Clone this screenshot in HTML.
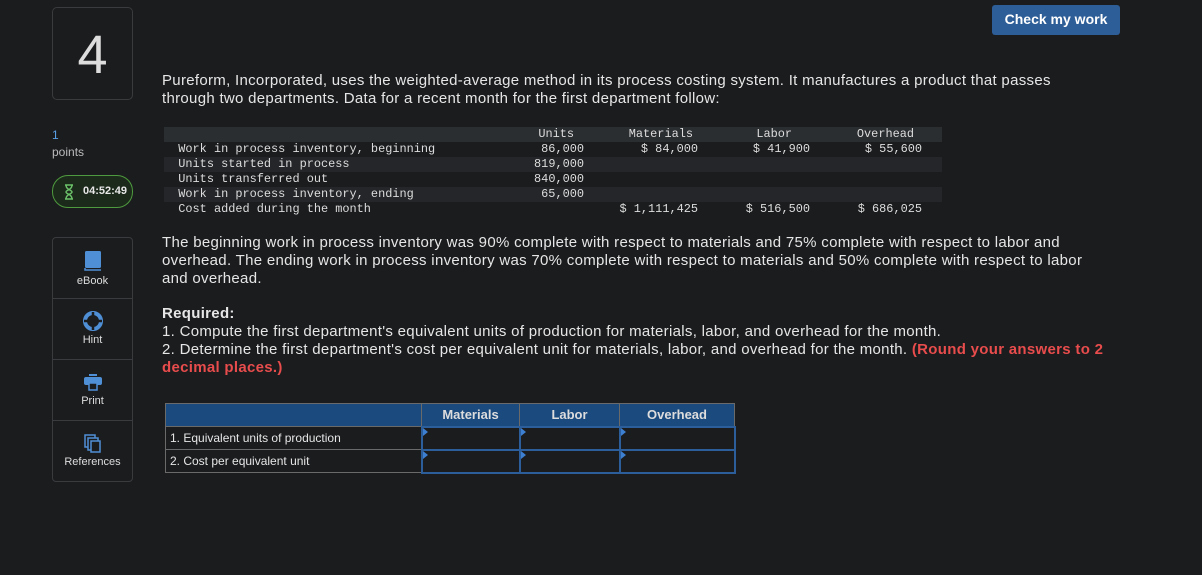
<!DOCTYPE html>
<html><head><style>
body{margin:0;width:1202px;height:575px;background:#1b1c1e;font-family:"Liberation Sans",sans-serif;color:#e6e6e6;position:relative;overflow:hidden}
.a{position:absolute}
.num{left:52px;top:7px;width:81px;height:93px;border:1px solid #3a3b3e;border-radius:5px;box-sizing:border-box;text-align:center;font-size:54px;line-height:94px;color:#ddd;font-weight:300}
.btn{left:992px;top:5px;width:128px;height:30px;background:#2e5e97;border-radius:3px;color:#fff;font-weight:bold;font-size:14px;text-align:center;line-height:29px}
.side{left:52px;top:237px;width:81px;height:245px;border:1px solid #3a3b3e;border-radius:4px;box-sizing:border-box}
.side div{height:61px;border-bottom:1px solid #3a3b3e;text-align:center;font-size:11px;color:#ddd;box-sizing:border-box;padding-top:12px}
.side div:last-child{border:none}
.p{font-size:15px;line-height:18px;color:#e6e6e6;letter-spacing:0.3px}
.mono{font-family:"Liberation Mono",monospace;font-size:11.9px;color:#ddd}
table.d{border-collapse:collapse;position:absolute;left:164px;top:127px;width:778px;table-layout:fixed}
table.d td{height:15px;padding:0;line-height:15px;white-space:pre;overflow:hidden}
.r{text-align:right}
table.q{position:absolute;left:165px;top:403px;border-collapse:collapse;font-size:12px}
table.q td{border:1px solid #6a6a6a;padding:0}
.in{border:2px solid #2d5e9c!important;position:relative}
.in:before{content:"";position:absolute;left:0;top:0;border-left:5px solid #3d7fd0;border-top:4px solid transparent;border-bottom:4px solid transparent}
</style></head><body>
<div class="a num">4</div>
<div class="a btn">Check my work</div>
<div class="a" style="left:52px;top:128px;font-size:12px;color:#5aa0e6">1</div>
<div class="a" style="left:52px;top:145px;font-size:12px;color:#bbb">points</div>
<div class="a" style="left:52px;top:175px;width:81px;height:33px;border:1px solid #4e9a3e;border-radius:16px;box-sizing:border-box;background:#1c2a1c;font-size:11px;font-weight:bold;line-height:31px;color:#e8e8e8;text-align:right;padding-right:5px">
<svg style="position:absolute;left:11px;top:8px" width="10" height="16" viewBox="0 0 10 16"><path d="M1 1h8M1 15h8M2 1c0 5 6 5 6 7s-6 2-6 7M8 1c0 5-6 5-6 7s6 2 6 7" stroke="#6cc36a" stroke-width="1.4" fill="none"/></svg>04:52:49</div>
<div class="a side">
<div><svg width="20" height="22" viewBox="0 0 20 22"><rect x="2" y="1" width="16" height="17" rx="1.5" fill="#4f8fd6"/><path d="M2 18v2h16" stroke="#4f8fd6" stroke-width="1.5" fill="none"/></svg><br>eBook</div>
<div><svg width="20" height="20" viewBox="0 0 20 20"><circle cx="10" cy="10" r="8" fill="none" stroke="#4f8fd6" stroke-width="4"/><path d="M10 1v4M10 15v4M1 10h4M15 10h4" stroke="#1b1c1e" stroke-width="2.5"/></svg><br>Hint</div>
<div><svg width="20" height="20" viewBox="0 0 20 20"><rect x="6" y="2" width="8" height="2" fill="#4f8fd6"/><rect x="1" y="5" width="18" height="8" rx="2" fill="#4f8fd6"/><rect x="6" y="11" width="8" height="7" fill="#1b1c1e" stroke="#4f8fd6" stroke-width="1.5"/></svg><br>Print</div>
<div><svg width="20" height="20" viewBox="0 0 20 20"><rect x="2" y="2" width="10" height="12" fill="none" stroke="#4f8fd6" stroke-width="1.5"/><rect x="5" y="5" width="10" height="12" fill="#1b1c1e" stroke="#4f8fd6" stroke-width="1.5"/><rect x="8" y="8" width="9" height="11" fill="#1b1c1e" stroke="#4f8fd6" stroke-width="1.5"/></svg><br>References</div>
</div>
<div class="a p" style="left:162px;top:72px;width:920px">Pureform, Incorporated, uses the weighted-average method in its process costing system. It manufactures a product that passes through two departments. Data for a recent month for the first department follow:</div>
<table class="d mono">
<tr style="background:#2b2e31"><td style="width:340px"></td><td class="r" style="width:86px;padding-right:16px;width:70px">Units</td><td class="r" style="width:103px;padding-right:11px">Materials</td><td class="r" style="width:88px;padding-right:24px">Labor</td><td class="r" style="padding-right:28px">Overhead</td></tr>
<tr style="background:#1b1c1e"><td>  Work in process inventory, beginning</td><td class="r" style="padding-right:6px">86,000</td><td class="r" style="padding-right:6px">$ 84,000</td><td class="r" style="padding-right:6px">$ 41,900</td><td class="r" style="padding-right:20px">$ 55,600</td></tr>
<tr style="background:#242629"><td>  Units started in process</td><td class="r" style="padding-right:6px">819,000</td><td></td><td></td><td></td></tr>
<tr style="background:#1b1c1e"><td>  Units transferred out</td><td class="r" style="padding-right:6px">840,000</td><td></td><td></td><td></td></tr>
<tr style="background:#242629"><td>  Work in process inventory, ending</td><td class="r" style="padding-right:6px">65,000</td><td></td><td></td><td></td></tr>
<tr style="background:#1b1c1e"><td>  Cost added during the month</td><td></td><td class="r" style="padding-right:6px">$ 1,111,425</td><td class="r" style="padding-right:6px">$ 516,500</td><td class="r" style="padding-right:20px">$ 686,025</td></tr>
</table>
<div class="a p" style="left:162px;top:234px;width:950px">The beginning work in process inventory was 90% complete with respect to materials and 75% complete with respect to labor and overhead. The ending work in process inventory was 70% complete with respect to materials and 50% complete with respect to labor and overhead.</div>
<div class="a p" style="left:162px;top:305px;width:960px"><b>Required:</b><br>1. Compute the first department's equivalent units of production for materials, labor, and overhead for the month.<br>2. Determine the first department's cost per equivalent unit for materials, labor, and overhead for the month. <b style="color:#e84c4c">(Round your answers to 2 decimal places.)</b></div>
<table class="q">
<tr style="background:#1a4a7e;height:23px;font-weight:bold;color:#ddd;font-size:13px"><td style="width:255px"></td><td style="width:97px;text-align:center">Materials</td><td style="width:99px;text-align:center">Labor</td><td style="width:114px;text-align:center">Overhead</td></tr>
<tr style="height:23px"><td style="padding-left:4px">1. Equivalent units of production</td><td class="in"></td><td class="in"></td><td class="in"></td></tr>
<tr style="height:23px"><td style="padding-left:4px">2. Cost per equivalent unit</td><td class="in"></td><td class="in"></td><td class="in"></td></tr>
</table>
</body></html>
